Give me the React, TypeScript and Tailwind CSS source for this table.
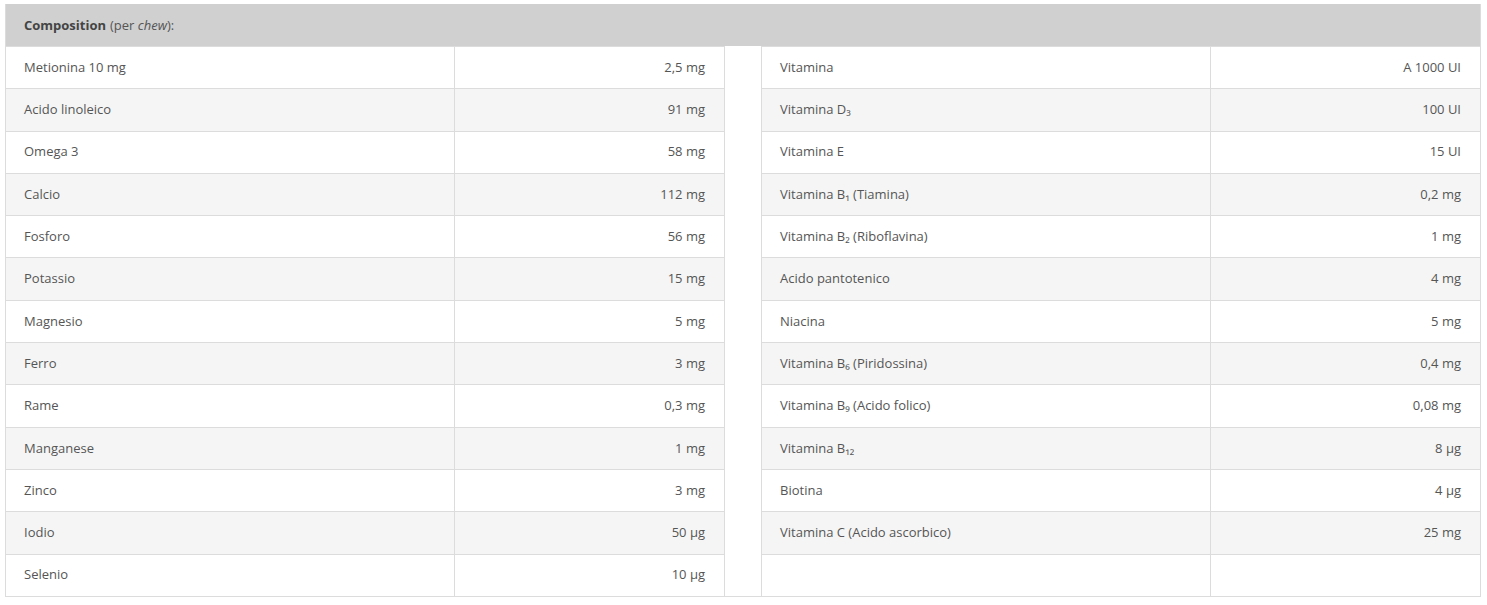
const LEFT: [string, string][] = [
  ["Metionina 10 mg", "2,5 mg"],
  ["Acido linoleico", "91 mg"],
  ["Omega 3", "58 mg"],
  ["Calcio", "112 mg"],
  ["Fosforo", "56 mg"],
  ["Potassio", "15 mg"],
  ["Magnesio", "5 mg"],
  ["Ferro", "3 mg"],
  ["Rame", "0,3 mg"],
  ["Manganese", "1 mg"],
  ["Zinco", "3 mg"],
  ["Iodio", "50 µg"],
  ["Selenio", "10 µg"],
];

const RIGHT: [string, string][] = [
  ["Vitamina", "A 1000 UI"],
  ["Vitamina D₃", "100 UI"],
  ["Vitamina E", "15 UI"],
  ["Vitamina B₁ (Tiamina)", "0,2 mg"],
  ["Vitamina B₂ (Riboflavina)", "1 mg"],
  ["Acido pantotenico", "4 mg"],
  ["Niacina", "5 mg"],
  ["Vitamina B₆ (Piridossina)", "0,4 mg"],
  ["Vitamina B₉ (Acido folico)", "0,08 mg"],
  ["Vitamina B₁₂", "8 µg"],
  ["Biotina", "4 µg"],
  ["Vitamina C (Acido ascorbico)", "25 mg"],
  ["", ""],
];

function Rows({ rows }: { rows: [string, string][] }) {
  return (
    <div className="flex flex-col">
      {rows.map(([name, value], i) => (
        <div
          key={i}
          className={`flex h-[42.3px] border-t border-[#dcdcdc] ${i % 2 === 1 ? "bg-[#f5f5f5]" : "bg-white"}`}
        >
          <div className="flex w-[449px] items-center border-r border-[#dcdcdc] pl-[18px]">{name}</div>
          <div className="flex flex-1 items-center justify-end pr-[19px]">{value}</div>
        </div>
      ))}
    </div>
  );
}

export default function App() {
  return (
    <div className="bg-white pl-[5px] pt-[4px] text-[13px] text-[#555] font-['Open_Sans','Noto_Sans',sans-serif]">
      <div className="w-[1476px] border-x border-b border-[#dcdcdc]">
        <div className="flex h-[42px] items-center bg-[#d0d0d0] pl-[18px] pt-[2px] text-[#444]">
          <span className="font-bold">Composition</span>
          <span className="ml-1 text-[#555]">
            (per <i>chew</i>):
          </span>
        </div>
        <div className="flex">
          <div className="w-[719px] border-r border-[#dcdcdc]">
            <Rows rows={LEFT} />
          </div>
          <div className="w-[37px] border-r border-[#dcdcdc] bg-white" />
          <div className="flex-1">
            <Rows rows={RIGHT} />
          </div>
        </div>
      </div>
    </div>
  );
}
